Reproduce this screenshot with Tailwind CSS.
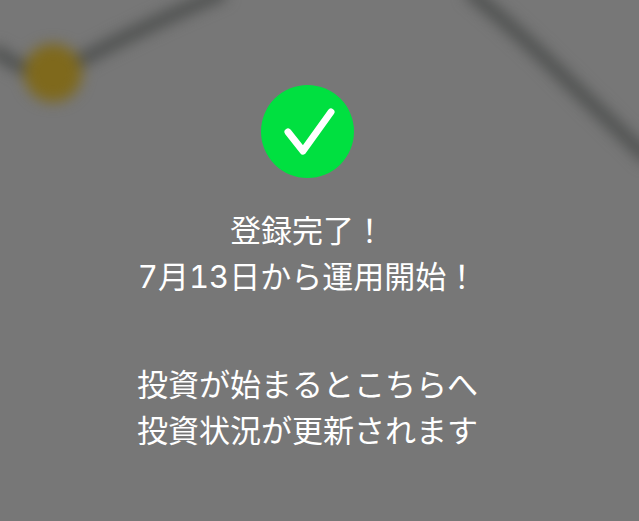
<!DOCTYPE html>
<html lang="ja">

<head>
  <meta charset="UTF-8">
  <meta name="viewport" content="width=device-width, initial-scale=1.0">
  <title>登録完了</title>
  <script src="https://cdn.jsdelivr.net/npm/@tailwindcss/browser@4"></script>
</head>

<body class="relative h-[521px] w-[639px] overflow-hidden bg-[#777777] font-['Inter','Noto_Sans_CJK_JP',sans-serif] text-white tabular-nums">

  <!-- ぼかした背景 -->
  <svg class="absolute inset-0 h-full w-full" viewBox="0 0 639 521" fill="none">
    <g class="blur-[7px]">
      <path d="M-8 50 L30 72" stroke="#505251" stroke-width="14" />
      <path d="M60 72 Q130 32 225 -8" stroke="#505251" stroke-width="14" />
      <path d="M468 -10 Q520 33 567 80 L650 160" stroke="#505251" stroke-width="14" />
      <circle cx="53" cy="73" r="29" fill="#7f691c" />
    </g>
  </svg>

  <!-- 本文 -->
  <main class="relative flex w-[615px] flex-col items-center pt-[85px]">
    <div class="flex h-[93px] w-[93px] items-center justify-center rounded-full bg-[#00e040]">
      <svg class="h-[93px] w-[93px]" viewBox="0 0 93 93" fill="none">
        <path d="M27 47 L42 66 L70 27" stroke="#ffffff" stroke-width="7" stroke-linecap="round" stroke-linejoin="round" />
      </svg>
    </div>
    <p class="mt-[30px] text-center text-[31px] leading-[46px] font-normal">登録完了！<br>7月13日から運用開始！</p>
    <p class="mt-[62px] text-center text-[31px] leading-[46px] font-normal">投資が始まるとこちらへ<br>投資状況が更新されます</p>
  </main>

</body>

</html>
